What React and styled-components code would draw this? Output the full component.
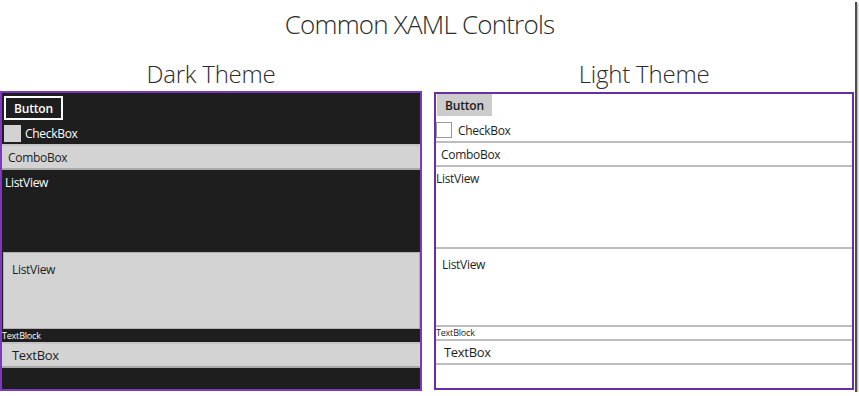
import React from "react";
import styled, { createGlobalStyle } from "styled-components";

const GlobalStyle = createGlobalStyle`
  body {
    margin: 0;
    background: #ffffff;
    font-family: "Open Sans", "Noto Sans", sans-serif;
  }
`;

const Frame = styled.div`
  width: 855px;
  height: 392px;
  background: #ffffff;
  box-shadow: 2px 2px 0 #4d4d4d, 3px 3px 2px rgba(0, 0, 0, 0.35);
  overflow: hidden;
`;

const Title = styled.h1`
  margin: 0;
  height: 48px;
  padding-right: 16px;
  line-height: 48px;
  text-align: center;
  font-size: 26px;
  font-weight: 300;
  letter-spacing: -0.8px;
  color: #2b2b2b;
`;

const Columns = styled.div`
  display: grid;
  grid-template-columns: 422px 420px;
  column-gap: 12px;
  align-items: start;
`;

const Column = styled.section`
  display: flex;
  flex-direction: column;
`;

const Heading = styled.h2`
  margin: 0;
  box-sizing: border-box;
  height: 43px;
  padding-top: 10px;
  line-height: 32px;
  text-align: center;
  font-size: 24px;
  font-weight: 300;
  letter-spacing: -0.2px;
  color: #2b2b2b;
`;

const Panel = styled.div`
  box-sizing: border-box;
  display: flex;
  flex-direction: column;
  height: ${(p) => (p.$dark ? 300 : 298)}px;
  margin-top: ${(p) => (p.$dark ? 0 : 1)}px;
  border: 2px solid ${(p) => (p.$dark ? "#7d38c0" : "#6a2ea3")};
  background: ${(p) => (p.$dark ? "#1e1e1e" : "#ffffff")};
  color: ${(p) => (p.$dark ? "#ffffff" : "#1e1e1e")};
  font-size: 12px;
  letter-spacing: -0.3px;
`;

const Button = styled.button`
  box-sizing: border-box;
  align-self: flex-start;
  width: ${(p) => (p.$dark ? 59 : 55)}px;
  height: ${(p) => (p.$dark ? 24 : 22)}px;
  margin: ${(p) => (p.$dark ? "3px 0 0 2px" : "0 0 0 1px")};
  padding: 0;
  border: ${(p) => (p.$dark ? "2px solid #ffffff" : "none")};
  background: ${(p) => (p.$dark ? "transparent" : "#cccccc")};
  color: ${(p) => (p.$dark ? "#ffffff" : "#1a1a1a")};
  font-family: inherit;
  font-size: 12px;
  font-weight: 600;
  letter-spacing: -0.2px;
`;

const CheckRow = styled.label`
  display: flex;
  align-items: center;
  gap: ${(p) => (p.$dark ? 4 : 6)}px;
  height: ${(p) => (p.$dark ? 17 : 16)}px;
  margin: ${(p) => (p.$dark ? "5px 0 2px 2px" : "6px 0 3px 0")};
`;

const Box = styled.span`
  box-sizing: border-box;
  width: ${(p) => (p.$dark ? 17 : 16)}px;
  height: ${(p) => (p.$dark ? 17 : 16)}px;
  background: ${(p) => (p.$dark ? "#d2d2d2" : "#ffffff")};
  border: ${(p) => (p.$dark ? "none" : "1px solid #9a9a9a")};
`;

const Field = styled.div`
  box-sizing: border-box;
  display: flex;
  align-items: center;
  height: ${(p) => p.$h}px;
  padding-left: ${(p) => p.$pad}px;
  background: ${(p) => (p.$dark ? "#d3d3d3" : "#ffffff")};
  color: #1e1e1e;
  border-top: 2px solid ${(p) => (p.$dark ? "#c4c4c4" : "#bdbdbd")};
  border-bottom: 2px solid ${(p) => (p.$dark ? "#a9a9a9" : "#bdbdbd")};
  font-size: ${(p) => p.$size || 12}px;
`;

const List = styled.div`
  box-sizing: border-box;
  height: ${(p) => p.$h}px;
  padding: ${(p) => p.$padTop}px 0 0 ${(p) => p.$pad}px;
  margin-left: ${(p) => p.$indent || 0}px;
  background: ${(p) => (p.$filled ? "#d3d3d3" : "transparent")};
  color: ${(p) => (p.$filled ? "#1e1e1e" : "inherit")};
  border: ${(p) => (p.$filled ? "1px solid #b0b0b0" : "none")};
  ${(p) =>
    p.$lined &&
    `border-top: 2px solid #bdbdbd; border-bottom: 2px solid #bdbdbd;`}
  font-size: 12px;
  line-height: 16px;
`;

const TextBlock = styled.div`
  height: ${(p) => p.$h}px;
  line-height: ${(p) => p.$h}px;
  font-size: 9px;
  letter-spacing: -0.2px;
`;

function DarkPanel() {
  return (
    <Panel $dark>
      <Button $dark>Button</Button>
      <CheckRow $dark>
        <Box $dark />
        CheckBox
      </CheckRow>
      <Field $dark $h={26} $pad={6}>
        ComboBox
      </Field>
      <List $h={82} $padTop={5} $pad={3}>
        ListView
      </List>
      <List $filled $h={77} $padTop={9} $pad={8} $indent={1}>
        ListView
      </List>
      <TextBlock $h={13}>TextBlock</TextBlock>
      <Field $dark $h={26} $pad={10} $size={13}>
        TextBox
      </Field>
    </Panel>
  );
}

function LightPanel() {
  return (
    <Panel>
      <Button>Button</Button>
      <CheckRow>
        <Box />
        CheckBox
      </CheckRow>
      <Field $h={26} $pad={5}>
        ComboBox
      </Field>
      <List $h={80} $padTop={4} $pad={0}>
        ListView
      </List>
      <List $lined $h={80} $padTop={8} $pad={6}>
        ListView
      </List>
      <TextBlock $h={12}>TextBlock</TextBlock>
      <Field $h={26} $pad={8} $size={13}>
        TextBox
      </Field>
    </Panel>
  );
}

export default function App() {
  return (
    <>
      <GlobalStyle />
      <Frame>
        <Title>Common XAML Controls</Title>
        <Columns>
          <Column>
            <Heading>Dark Theme</Heading>
            <DarkPanel />
          </Column>
          <Column>
            <Heading>Light Theme</Heading>
            <LightPanel />
          </Column>
        </Columns>
      </Frame>
    </>
  );
}
